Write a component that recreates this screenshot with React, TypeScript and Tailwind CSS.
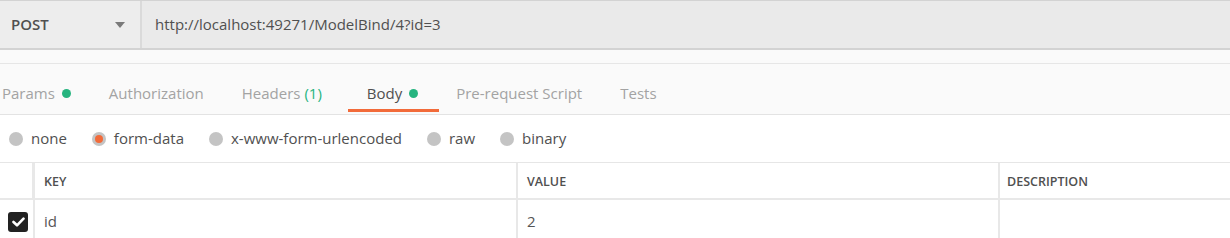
import React from "react";

const tabs = [
  { label: "Params", dot: true, cls: "" },
  { label: "Authorization", cls: "" },
  { label: "Headers", count: "(1)", cls: "" },
  { label: "Body", dot: true, active: true, cls: "ml-[7px] pr-[21px]" },
  { label: "Pre-request Script", cls: "ml-[-2px]" },
  { label: "Tests", cls: "" },
];

const bodyTypes = [
  { label: "none" },
  { label: "form-data", checked: true },
  { label: "x-www-form-urlencoded" },
  { label: "raw" },
  { label: "binary" },
];

function Radio({ checked }: { checked?: boolean }) {
  return (
    <span className="w-[14px] h-[14px] rounded-full bg-[#c4c4c4] flex items-center justify-center shrink-0">
      {checked && <span className="w-[8px] h-[8px] rounded-full bg-[#f26b3a]" />}
    </span>
  );
}

export default function App() {
  return (
    <div
      className="w-[1230px] h-[238px] overflow-hidden bg-white text-[#505050]"
      style={{ fontFamily: '"Open Sans", "Noto Sans", sans-serif' }}
    >
      {/* request bar */}
      <div className="flex h-[50px] border-t border-b-2 border-[#d3d3d3] bg-[#eaeaea]">
        <div className="w-[142px] flex items-center justify-between pl-[11px] pr-[15px] bg-[#ededed] border-r-2 border-[#dadada]">
          <span className="text-[15px] font-semibold text-[#505050]">POST</span>
          <svg width="10" height="6" viewBox="0 0 10 6">
            <path d="M0 0 L10 0 L5 6 Z" fill="#7a7a7a" />
          </svg>
        </div>
        <div className="flex-1 flex items-center pl-[13px] text-[15px] text-[#505050]">
          http://localhost:49271/ModelBind/4?id=3
        </div>
      </div>

      <div className="h-[14px] bg-[#fafafa] border-b border-[#e6e6e6]" />

      {/* tabs */}
      <div className="h-[51px] bg-[#fafafa] border-b border-[#e3e3e3] flex ml-[-17px]">
        {tabs.map((t) => (
          <div
            key={t.label}
            className={
              "h-[48px] pt-[19px] pl-[19px] pr-[19px] flex items-start border-b-[3px] " +
              (t.active ? "border-[#f26b3a] " : "border-transparent ") +
              t.cls
            }
          >
            <span
              className={
                "text-[15px] leading-[20px] " +
                (t.active ? "text-[#505050]" : "text-[#a3a3a3]")
              }
            >
              {t.label}
              {t.count && <span className="text-[#26b47f]"> {t.count}</span>}
            </span>
            {t.dot && (
              <span className="w-[9px] h-[9px] rounded-full bg-[#26b47f] ml-[7px] mt-[6px]" />
            )}
          </div>
        ))}
      </div>

      {/* body type */}
      <div className="h-[48px] flex items-center pl-[9px] gap-[25px] border-b border-[#e6e6e6]">
        {bodyTypes.map((b) => (
          <div key={b.label} className="flex items-center gap-[8px]">
            <Radio checked={b.checked} />
            <span className="text-[15px] text-[#505050]">{b.label}</span>
          </div>
        ))}
      </div>

      {/* table */}
      <div className="flex h-[37px] border-b-2 border-[#e8e8e8] text-[12.5px] font-semibold text-[#505050]">
        <div className="w-[35px] border-r-[3px] border-[#e8e8e8]" />
        <div className="w-[483px] border-r-2 border-[#e8e8e8] flex items-center pt-[3px] pl-[9px]">KEY</div>
        <div className="w-[482px] border-r-2 border-[#e8e8e8] flex items-center pt-[3px] pl-[9px]">VALUE</div>
        <div className="flex-1 flex items-center pt-[3px] pl-[7px]">DESCRIPTION</div>
      </div>
      <div className="flex h-[43px] text-[15px] text-[#555555]">
        <div className="w-[35px] border-r-2 border-[#e8e8e8] flex items-center pl-[8px]">
          <span className="w-[20px] h-[20px] rounded-[3px] bg-[#222222] flex items-center justify-center">
            <svg width="13" height="10" viewBox="0 0 13 10">
              <path d="M1.5 5 L5 8.3 L11.5 1.7" stroke="#fff" strokeWidth="2.6" fill="none" strokeLinecap="round" strokeLinejoin="round" />
            </svg>
          </span>
        </div>
        <div className="w-[483px] border-r-2 border-[#e8e8e8] flex items-center pl-[9px]">id</div>
        <div className="w-[482px] border-r-2 border-[#e8e8e8] flex items-center pl-[9px]">2</div>
        <div className="flex-1" />
      </div>
    </div>
  );
}
